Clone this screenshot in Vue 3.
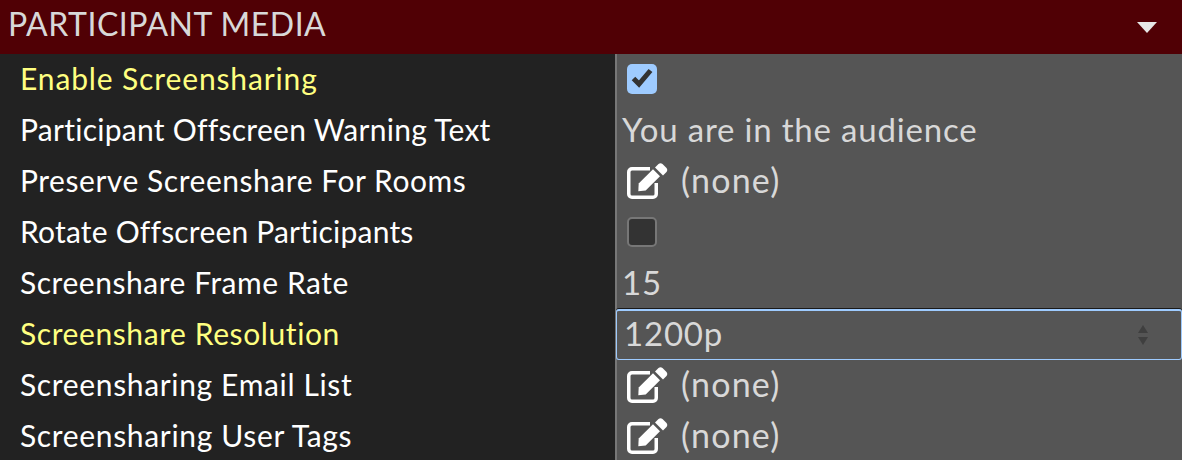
<script setup>
const rows = [
  { label: 'Enable Screensharing', tracking: 0.87, changed: true, kind: 'check', on: true },
  { label: 'Participant Offscreen Warning Text', tracking: 0.27, kind: 'text', value: 'You are in the audience' },
  { label: 'Preserve Screenshare For Rooms', tracking: 0.54, kind: 'edit' },
  { label: 'Rotate Offscreen Participants', tracking: 0.2, kind: 'check', on: false },
  { label: 'Screenshare Frame Rate', tracking: 0.54, kind: 'text', value: '15' },
  { label: 'Screenshare Resolution', tracking: 0.59, changed: true, kind: 'select', value: '1200p' },
  { label: 'Screensharing Email List', tracking: 0.65, kind: 'edit' },
  { label: 'Screensharing User Tags', tracking: 0.66, kind: 'edit' },
]
</script>

<template>
  <div class="panel">
    <header class="head">
      <span class="title">PARTICIPANT MEDIA</span>
      <span class="caret"></span>
    </header>
    <div v-for="r in rows" :key="r.label" class="row">
      <div class="label" :class="{ changed: r.changed }" :style="{ letterSpacing: r.tracking + 'px' }">{{ r.label }}</div>
      <div class="value">
        <span v-if="r.kind === 'check'" class="box" :class="{ on: r.on }">
          <svg v-if="r.on" viewBox="0 0 30 30" width="30" height="30">
            <path d="M6.500 14.500l5.500 5.500L23.500 6.500" fill="none" stroke="#333" stroke-width="5" />
          </svg>
        </span>
        <span v-else-if="r.kind === 'text'" class="text">{{ r.value }}</span>
        <span v-else-if="r.kind === 'edit'" class="edit">
          <svg viewBox="0 0 41 37" width="41" height="37">
            <path d="M23 5.750H5a3.250 3.250 0 0 0-3.250 3.250v22a3.250 3.250 0 0 0 3.250 3.250h21a3.250 3.250 0 0 0 3.250-3.250V20" fill="none" stroke="#fff" stroke-width="3.500" />
            <path d="M11.300 28.300l.4-7.800L26 6.200l7 7L18.700 27.600z" fill="#fff" />
            <path d="M28 4.500l3.500-3.500q2-1.500 4 0l4 4q1.500 2 0 4L36 12.500z" fill="#fff" />
          </svg>
          <span class="none">(none)</span>
        </span>
        <div v-else class="select">
          <span class="text">{{ r.value }}</span>
          <svg class="arrows" viewBox="0 0 12 22" width="12" height="22">
            <path d="M6 1l5 8H1zM6 21l5-8H1z" fill="#3f3f3f" />
          </svg>
        </div>
      </div>
    </div>
  </div>
</template>

<style scoped>
.panel {
  width: 1182px;
  height: 460px;
  overflow: hidden;
  background: #222;
  font-family: Lato, "Open Sans", sans-serif;
}
.head {
  height: 54px;
  background: #500005;
  display: flex;
  align-items: center;
  justify-content: space-between;
  padding: 0 25px 0 8px;
  box-sizing: border-box;
}
.title {
  color: #d8d8d8;
  font-size: 32px;
  letter-spacing: 0.5px;
  margin-top: -8px;
}
.caret {
  width: 0;
  height: 0;
  border-left: 10px solid transparent;
  border-right: 10px solid transparent;
  border-top: 11px solid #e6e6e6;
}
.row {
  display: flex;
  height: 51px;
}
.label {
  width: 615px;
  box-sizing: border-box;
  padding: 0 0 4px 20px;
  display: flex;
  align-items: center;
  color: #fff;
  font-size: 30px;
  background: #222;
}
.label.changed {
  color: #ffff80;
}
.value {
  flex: 1;
  background: #555;
  border-left: 2px solid #777;
  display: flex;
  align-items: center;
  padding-left: 5px;
  color: #d8d8d8;
  font-size: 33px;
  min-width: 0;
}
.text {
  letter-spacing: 0.8px;
  margin-bottom: 4px;
}
.box {
  width: 30px;
  height: 30px;
  margin: 0 0 1px 5px;
  border-radius: 5px;
  box-sizing: border-box;
  border: 2px solid #777;
  background: #333;
}
.box.on {
  border: 0;
  background: #9ecbff;
}
.box svg {
  display: block;
}
.edit {
  display: flex;
  align-items: center;
  gap: 13px;
  margin-left: 5px;
}
.none {
  font-size: 34px;
  letter-spacing: 1.2px;
  margin-bottom: 4px;
}
.select {
  flex: 1;
  align-self: stretch;
  margin-left: -6px;
  box-sizing: border-box;
  border: 1px solid #9ecbff;
  border-top-width: 2px;
  border-radius: 3px;
  box-shadow: 0 -1px 0 #1a1a1a;
  display: flex;
  align-items: center;
  justify-content: space-between;
  padding: 0 32px 0 7px;
}
.arrows {
  display: block;
}
</style>
